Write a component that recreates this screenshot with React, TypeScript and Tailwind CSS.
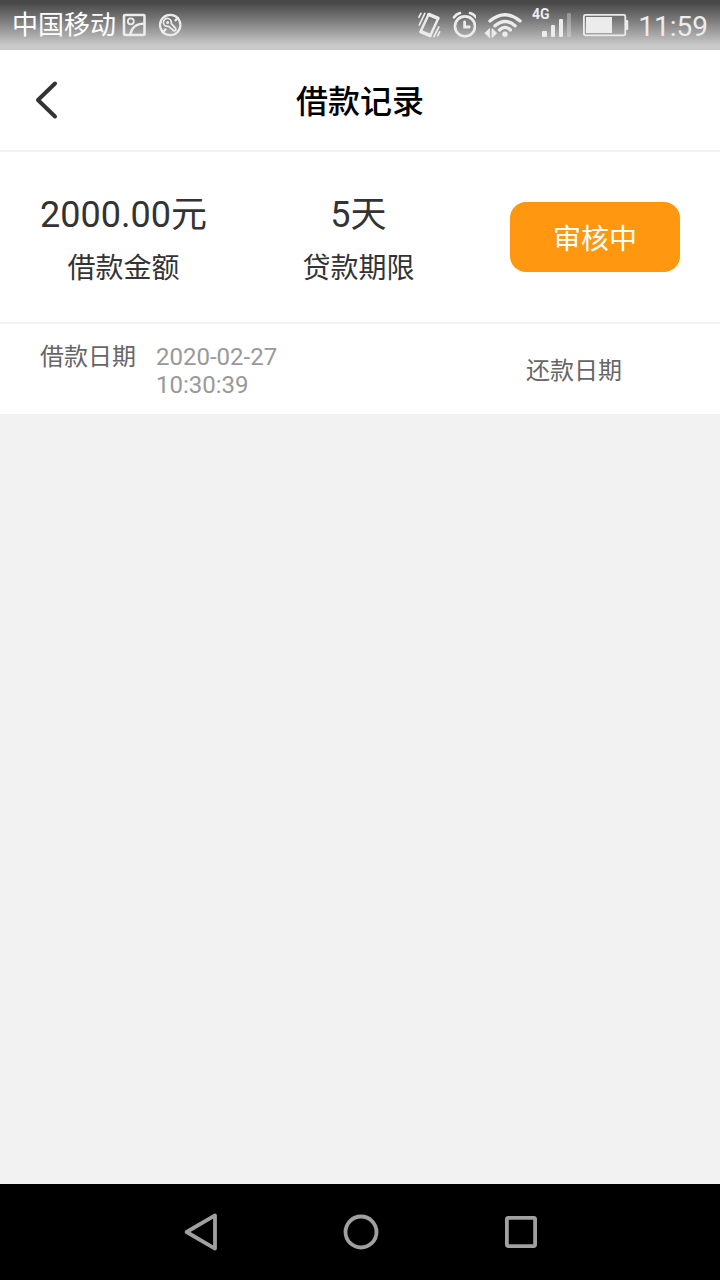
import type { ReactNode } from "react";

type LoanRecord = {
  id: number;
  amount: string;
  term: string;
  status: string;
  borrowedAt: string;
  repayAt: string;
};

const records: LoanRecord[] = [
  {
    id: 1,
    amount: "2000.00元",
    term: "5天",
    status: "审核中",
    borrowedAt: "2020-02-27 10:30:39",
    repayAt: "",
  },
];

function StatusBar() {
  return (
    <div className="flex h-[50px] items-center justify-between bg-linear-to-b from-[#484848] from-5% to-[#c9c9c9] to-90% px-3 text-[#ececec]">
      <div className="flex items-center">
        <span className="text-[26px] leading-8 text-white">中国移动</span>
        {/* picture */}
        <svg className="ml-1.5 h-6 w-6" viewBox="0 0 24 24" fill="none" stroke="currentColor" aria-hidden="true">
          <rect x="2" y="2" width="20.5" height="20" rx="1" strokeWidth="2.6" />
          <circle cx="8.8" cy="8.3" r="3" strokeWidth="1.8" />
          <path d="M8.3 21.5C9.5 14.5 14 10.8 22 10.6" strokeWidth="2.4" />
        </svg>
        {/* wrench in a ring */}
        <svg className="ml-3 h-6 w-6" viewBox="0 0 24 24" fill="none" stroke="currentColor" strokeLinecap="round" strokeLinejoin="round" aria-hidden="true">
          <circle cx="12.2" cy="12" r="10.2" strokeWidth="2.2" />
          <path d="M8.2 13.2A4 4 0 1 1 13.2 8.2L13.4 10.6 17.6 15.4A1.5 1.5 0 0 1 15.5 17.5L10.6 13.4Z" strokeWidth="1.7" />
          <circle cx="9.6" cy="9.4" r="1.5" fill="currentColor" stroke="none" />
          <path d="M17.4 7.4l2.6-2.6M4.6 19.4l3-3" strokeWidth="2.2" />
        </svg>
      </div>

      <div className="flex items-center gap-2">
        {/* vibrate */}
        <svg className="h-[50px] w-[26px]" viewBox="0 0 26 50" fill="none" stroke="currentColor" strokeLinecap="round" strokeLinejoin="round" aria-hidden="true">
          <path d="M10.8 14 20.4 18 12 36.2 2.4 32Z" strokeWidth="2.5" />
          <path d="M10.4 14.6 20 18.6M3 31.4 12.4 35.4" strokeWidth="2.8" />
          <path d="M6.8 13.4 1.3 25M2.9 13.4 1 17.2M20.8 27 16 36.6M21.6 31.8 19.8 35.6" strokeWidth="1.7" />
        </svg>
        {/* alarm */}
        <svg className="h-[50px] w-6" viewBox="0 0 24 50" fill="none" stroke="currentColor" strokeLinecap="round" aria-hidden="true">
          <circle cx="13" cy="26.3" r="10" strokeWidth="2.7" />
          <path d="M2 17.3Q4 14.2 8 13.1M24 17.3Q22 14.2 18 13.1" strokeWidth="2.6" />
          <path d="M12.6 22v5h4.6" strokeWidth="2.8" />
        </svg>
        {/* wifi with traffic arrows */}
        <svg className="h-[50px] w-10" viewBox="0 0 40 50" fill="none" stroke="currentColor" strokeLinecap="round" aria-hidden="true">
          <path d="M6 21Q21 8.5 36 21" strokeWidth="3.4" />
          <path d="M11 25.8Q21 17 31 25.8" strokeWidth="3.4" />
          <path d="M15.5 30Q21 24.8 26.5 30" strokeWidth="3.2" />
          <circle cx="21" cy="34.3" r="2.7" fill="currentColor" stroke="none" />
          <path d="M1 33 5.6 28.6V37.4ZM12.6 33 8 28.6V37.4Z" fill="currentColor" stroke="currentColor" strokeWidth="0.8" strokeLinejoin="round" />
        </svg>
        {/* mobile signal */}
        <svg className="h-[50px] w-[42px]" viewBox="0 0 42 50" fill="currentColor" aria-label="4G">
          <text x="0" y="19" fontSize="14" fontWeight="700" fontFamily="Roboto, sans-serif">4G</text>
          <rect x="10" y="31" width="5" height="6" rx="1" />
          <rect x="19" y="25" width="4" height="12" rx="1" />
          <rect x="27" y="19" width="4" height="18" rx="1" />
          <rect x="35" y="13" width="4" height="24" rx="1" opacity="0.35" />
        </svg>
        {/* battery */}
        <svg className="h-[50px] w-12" viewBox="0 0 48 50" fill="currentColor" aria-hidden="true">
          <rect x="1.9" y="14.9" width="41.4" height="20.4" rx="1.5" fill="none" stroke="currentColor" strokeWidth="1.8" />
          <rect x="4" y="17" width="26" height="16" />
          <rect x="43.6" y="20" width="2.6" height="10" rx="1" />
        </svg>
        <span className="pt-1 text-[28px] leading-8">11:59</span>
      </div>
    </div>
  );
}

function Header() {
  return (
    <header className="grid h-[102px] grid-cols-[96px_1fr_96px] items-center border-b-2 border-[#f2f2f2] bg-white">
      <button type="button" aria-label="返回" className="flex h-full items-center pl-8">
        <svg className="h-10 w-7" viewBox="0 0 28 40" fill="none" stroke="#333333" strokeWidth="4" strokeLinecap="round" strokeLinejoin="round">
          <path d="M23 3.5 6 20 23 36.5" />
        </svg>
      </button>
      <h1 className="pt-1 text-center text-[32px] leading-10 font-medium text-black">借款记录</h1>
    </header>
  );
}

function Figure({ value, label }: { value: string; label: string }) {
  return (
    <div className="flex flex-col items-center gap-3 pt-2 text-[#333333]">
      <span className="text-[36px] leading-[44px]">{value}</span>
      <span className="text-[28px] leading-10">{label}</span>
    </div>
  );
}

function DateField({ label, children }: { label: string; children?: ReactNode }) {
  return (
    <div className="flex gap-5 text-2xl leading-7">
      <dt className="text-[#666666]">{label}</dt>
      <dd className="w-[140px] text-[#999999]">{children}</dd>
    </div>
  );
}

function RecordCard({ record }: { record: LoanRecord }) {
  return (
    <section className="bg-white">
      <div className="flex h-[172px] items-center justify-between border-b-2 border-[#f2f2f2] px-10">
        <Figure value={record.amount} label="借款金额" />
        <Figure value={record.term} label="贷款期限" />
        <button type="button" className="h-[70px] w-[170px] rounded-2xl bg-[#ff9710] pt-1.5 text-[28px] leading-10 text-white">
          {record.status}
        </button>
      </div>
      <dl className="flex h-[90px] items-center justify-between pt-1 pl-10">
        <DateField label="借款日期">{record.borrowedAt}</DateField>
        <div className="flex w-[194px] text-2xl leading-7">
          <dt className="text-[#666666]">还款日期</dt>
          <dd className="text-[#999999]">{record.repayAt}</dd>
        </div>
      </dl>
    </section>
  );
}

function NavBar() {
  return (
    <nav className="flex h-24 items-center justify-center bg-black text-[#a0a0a0]">
      <button type="button" aria-label="后退" className="flex h-full w-40 items-center justify-center">
        <svg className="h-10 w-10" viewBox="0 0 40 40" fill="none" stroke="currentColor" strokeWidth="3.8" strokeLinejoin="round">
          <path d="M35 3.4V36.6L6.6 20Z" />
        </svg>
      </button>
      <button type="button" aria-label="主页" className="flex h-full w-40 items-center justify-center">
        <svg className="h-10 w-10" viewBox="0 0 40 40" fill="none" stroke="currentColor" strokeWidth="3.8">
          <circle cx="21" cy="20" r="15.5" />
        </svg>
      </button>
      <button type="button" aria-label="最近任务" className="flex h-full w-40 items-center justify-center">
        <svg className="h-10 w-10" viewBox="0 0 40 40" fill="none" stroke="currentColor" strokeWidth="3.8">
          <rect x="6.9" y="5.9" width="28.2" height="28.2" rx="1.5" />
        </svg>
      </button>
    </nav>
  );
}

export default function App() {
  return (
    <div className="flex min-h-screen flex-col bg-[#f2f2f2] font-[Roboto,'Noto_Sans_CJK_SC',sans-serif]">
      <StatusBar />
      <Header />
      <main className="flex-1">
        {records.map((record) => (
          <RecordCard key={record.id} record={record} />
        ))}
      </main>
      <NavBar />
    </div>
  );
}
